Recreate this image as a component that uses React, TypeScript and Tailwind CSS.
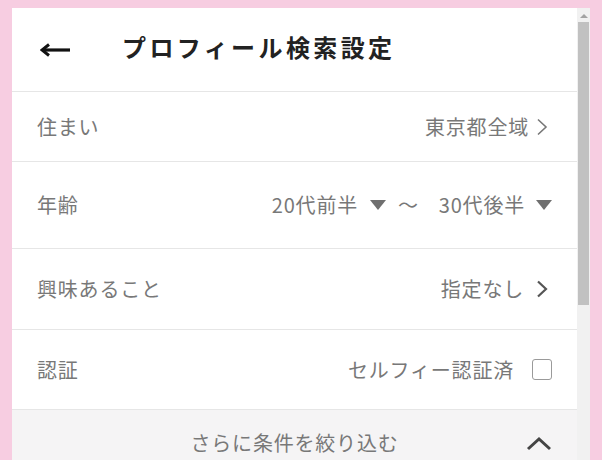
import React from 'react';

const font = { fontFamily: '"Noto Sans CJK JP", "Noto Sans", sans-serif' };

const Chevron: React.FC<{ bold?: boolean }> = ({ bold }) => (
  <svg width="12" height="18" viewBox="0 0 12 18" className={bold ? 'ml-[12px] mr-[4px]' : 'ml-[7px] mr-[4px]'}>
    <path d="M2 1.5 L10 9 L2 16.5" fill="none" stroke={bold ? '#555' : '#777'} strokeWidth={bold ? 2.2 : 1.6} />
  </svg>
);

const Caret: React.FC<{ className?: string }> = ({ className }) => (
  <svg width="16" height="12" viewBox="0 0 16 12" className={className}>
    <path d="M0 1 L16 1 L8 11 Z" fill="#6f6f6f" />
  </svg>
);

const rowText = 'flex items-center justify-between border-b border-[#e6e6e6] px-[25px] text-[20px] tracking-[0.8px] text-[#787878]';

export default function App() {
  return (
    <div className="h-[460px] overflow-hidden bg-[#f7cde1] pt-[8px] pl-[12px] pr-[12px]" style={font}>
      <div className="flex h-full">
        {/* パネル */}
        <div className="flex-1 bg-white">
          <div className="flex items-center h-[84px] border-b border-[#e6e6e6] pl-[28px] pb-[6px]">
            <svg width="32" height="14" viewBox="0 0 32 14" className="mt-[6px]">
              <path d="M30 7 L4 7" stroke="#111" strokeWidth="3.2" />
              <path d="M9 1.5 L2 7 L9 12.5" fill="none" stroke="#111" strokeWidth="3" />
            </svg>
            <h1 className="ml-[50px] text-[24px] font-bold tracking-[3.4px] text-[#222]">プロフィール検索設定</h1>
          </div>

          <div className={`${rowText} h-[70px]`}>
            <span>住まい</span>
            <span className="flex items-center">東京都全域<Chevron /></span>
          </div>

          <div className={`${rowText} h-[87px]`}>
            <span>年齢</span>
            <span className="flex items-center">
              20代前半<Caret className="ml-[12px]" />
              <span className="ml-[12px] mr-[20px]">～</span>
              30代後半<Caret className="ml-[11px]" />
            </span>
          </div>

          <div className={`${rowText} h-[81px]`}>
            <span>興味あること</span>
            <span className="flex items-center">指定なし<Chevron bold /></span>
          </div>

          <div className={`${rowText} h-[80px]`}>
            <span>認証</span>
            <span className="flex items-center">
              セルフィー認証済
              <span className="ml-[18px] w-[20px] h-[21px] border border-[#9a9a9a] rounded-[3px] bg-white" />
            </span>
          </div>

          <div className="relative flex justify-center h-[60px] pt-[18px] bg-[#f5f4f5] text-[20px] tracking-[0.8px] text-[#787878]">
            <span>さらに条件を絞り込む</span>
            <svg width="26" height="16" viewBox="0 0 26 16" className="absolute right-[25px] top-[26px]">
              <path d="M2 13 L13 3 L24 13" fill="none" stroke="#444" strokeWidth="3" />
            </svg>
          </div>
        </div>

        {/* スクロールバー */}
        <div className="w-[13px] bg-[#f1f1f1] flex flex-col items-center">
          <svg width="8" height="6" viewBox="0 0 8 6" className="mt-[5px]">
            <path d="M0 5 L4 1 L8 5 Z" fill="#a3a3a3" />
          </svg>
          <div className="mt-[3px] w-[11px] h-[283px] bg-[#c1c1c1]" />
        </div>
      </div>
    </div>
  );
}
